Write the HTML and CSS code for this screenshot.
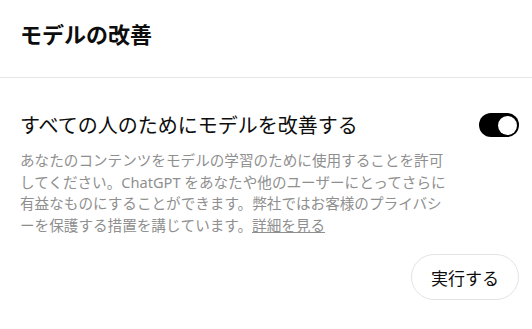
FILE: index.html
```html
<!DOCTYPE html>
<html lang="ja">
<head>
<meta charset="utf-8">
<link rel="stylesheet" href="styles.css">
</head>
<body>
<div class="dialog">
  <header class="header">
    <h1 class="title">モデルの改善</h1>
  </header>
  <div class="body">
    <div class="row">
      <span class="label">すべての人のためにモデルを改善する</span>
      <span class="toggle" role="switch" aria-checked="true"><span class="knob"></span></span>
    </div>
    <p class="desc">あなたのコンテンツをモデルの学習のために使用することを許可してください。ChatGPT をあなたや他のユーザーにとってさらに有益なものにすることができます。弊社ではお客様のプライバシーを保護する措置を講じています。<a class="link" href="#">詳細を見る</a></p>
    <div class="actions">
      <button class="btn">実行する</button>
    </div>
  </div>
</div>
</body>
</html>
```
FILE: styles.css
```css
html, body {
  margin: 0;
  padding: 0;
  background: #ffffff;
}
body {
  font-family: "Noto Sans", "Noto Sans CJK JP", sans-serif;
  color: #0d0d0d;
}
.dialog {
  width: 532px;
  height: 329px;
  overflow: hidden;
}
.header {
  height: 77px;
  border-bottom: 1px solid #e6e6e6;
  padding: 0 20px;
  display: flex;
  align-items: center;
  box-sizing: content-box;
}
.title {
  margin: 0;
  margin-top: -10px;
  font-size: 22px;
  font-weight: 700;
  line-height: 28px;
}
.body {
  padding: 0 13px 0 20px;
}
.row {
  display: flex;
  align-items: center;
  justify-content: space-between;
  margin-top: 33px;
  height: 28px;
}
.label {
  font-size: 20px;
  line-height: 28px;
  font-weight: 400;
  margin-top: 2px;
}
.toggle {
  width: 40px;
  height: 24px;
  border-radius: 12px;
  background: #000;
  display: flex;
  align-items: center;
  justify-content: flex-end;
  padding: 0 2px;
  box-sizing: border-box;
}
.knob {
  width: 19px;
  height: 19px;
  border-radius: 50%;
  background: #fff;
}
.desc {
  margin: 11px 0 0;
  font-size: 14.6px;
  line-height: 21.5px;
  color: #8f8f8f;
  width: 427px;
  line-break: normal;
}
.link {
  color: #8f8f8f;
  text-decoration: underline;
}
.actions {
  display: flex;
  justify-content: flex-end;
  margin-top: 18px;
}
.btn {
  font-family: inherit;
  font-size: 17px;
  color: #0d0d0d;
  background: #fff;
  border: 1px solid #e3e3e3;
  border-radius: 999px;
  height: 46px;
  width: 108px;
  padding: 0;
}
```
